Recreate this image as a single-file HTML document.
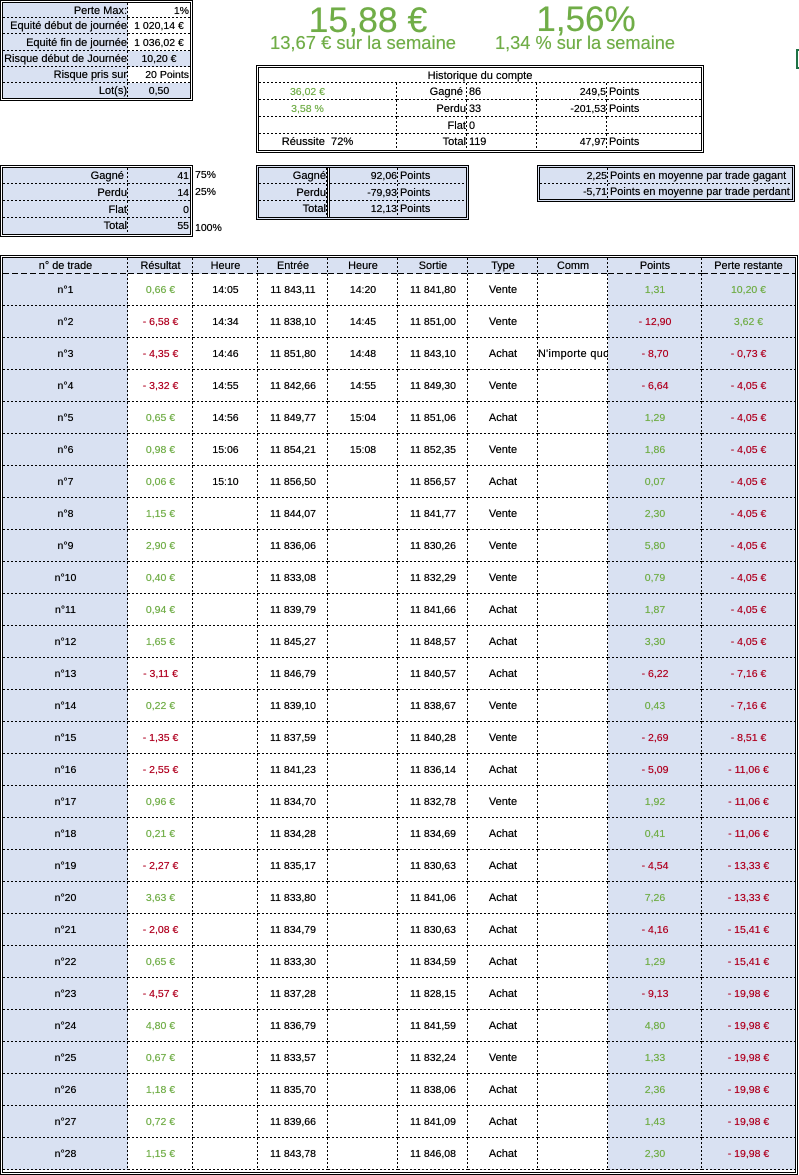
<!DOCTYPE html>
<html lang="fr"><head><meta charset="utf-8"><title>Journal de trading</title>
<style>
html,body{margin:0;padding:0;background:#fff}
body{width:799px;height:1170px;overflow:hidden;position:relative;font-family:"Liberation Sans",sans-serif;font-size:10.5px;color:#000;text-shadow:0 0 .4px currentColor}
.box{position:absolute;border:3px double #000;box-sizing:border-box;overflow:hidden}
table{table-layout:fixed;border-collapse:separate;border-spacing:0;width:100%}
td{padding:0 1px;white-space:nowrap;overflow:hidden;text-align:right;line-height:12px;box-sizing:border-box;
background-image:repeating-linear-gradient(90deg,#000 0 2px,transparent 2px 4px),repeating-linear-gradient(180deg,#000 0 2px,transparent 2px 4px);
background-position:left bottom,right top;background-size:100% 1px,1px 100%;background-repeat:no-repeat}
td:last-child{background-size:100% 1px,0 0}
tr:last-child td{background-size:0 0,1px 100%}
tr:last-child td:last-child{background-size:0 0,0 0}
.b{background-color:#d9e1f2}
.l{text-align:left;padding-left:2px;font-size:10.9px}.c{text-align:center}
.g{color:#70ad47}.r{color:#b00020}
.lab td:first-child{font-size:11px}
.w{font-size:11.1px}
.t{position:absolute;color:#70ad47;text-align:center;white-space:nowrap}
.n{position:absolute;white-space:nowrap;line-height:12px}
.dv{background:#fff;padding:0;border-left:1px solid #000;border-right:1px solid #000}
#m td{text-align:center;height:32px;background-size:100% 1px,1px 100%}
#m td:last-child{background-size:100% 1px,0 0}
#m td:nth-child(7){font-size:11px}
#m tr:first-child td{height:16px;font-size:10.9px;background-color:#d9e1f2;background-image:repeating-linear-gradient(90deg,#000 0 6px,transparent 6px 9px),repeating-linear-gradient(180deg,#000 0 2px,transparent 2px 4px)}
#m td.cm{text-align:left;padding:0;font-size:10.8px;letter-spacing:.35px}
</style></head><body>

<div class="box" style="left:0;top:0;width:193px;height:101px">
<table class="lab"><col style="width:125px"><col>
<tr style="height:15px"><td class="b">Perte Max:</td><td>1%</td></tr>
<tr style="height:16px"><td class="b">Equité début de journée</td><td class="c">1 020,14 €</td></tr>
<tr style="height:17px"><td class="b">Equité fin de journée</td><td class="c">1 036,02 €</td></tr>
<tr style="height:16px"><td class="b">Risque début de Journée</td><td class="b c">10,20 €</td></tr>
<tr style="height:16px"><td class="b">Risque pris sur</td><td>20 Points</td></tr>
<tr style="height:15px"><td class="b">Lot(s)</td><td class="b c">0,50</td></tr>
</table></div>

<div class="t" style="left:268px;width:200px;top:-1px;font-size:35.6px;line-height:42px">15,88 €</div>
<div class="t" style="left:486px;width:200px;top:-1px;font-size:35px;line-height:42px">1,56%</div>
<div class="t" style="left:263px;width:200px;top:32px;font-size:18.4px;line-height:22px">13,67 € sur la semaine</div>
<div class="t" style="left:485px;width:200px;top:32px;font-size:18.2px;line-height:22px">1,34 % sur la semaine</div>

<div style="position:absolute;left:796px;top:49px;width:6px;height:16px;border:2px solid #1e7145"></div>

<div class="box" style="left:256px;top:65px;width:448px;height:88px">
<table><col style="width:138px"><col style="width:70px"><col style="width:70px"><col style="width:70px"><col>
<tr style="height:15px"><td colspan="5" class="c w">Historique du compte</td></tr>
<tr style="height:17px"><td class="c g" style="padding-right:42px">36,02 €</td><td class="w">Gagné&nbsp;</td><td class="l">86</td><td>249,5</td><td class="l">Points</td></tr>
<tr style="height:17px"><td class="c g" style="padding-right:42px">3,58 %</td><td class="w">Perdu</td><td class="l">33</td><td>-201,53</td><td class="l">Points</td></tr>
<tr style="height:17px"><td></td><td class="w">Flat</td><td class="l">0</td><td></td><td></td></tr>
<tr style="height:16px"><td class="c w" style="padding-right:22px">Réussite &nbsp;72%</td><td class="w">Total</td><td class="l">119</td><td>47,97</td><td class="l">Points</td></tr>
</table></div>

<div class="box" style="left:0;top:165px;width:193px;height:72px">
<table><col style="width:125px"><col>
<tr style="height:16px"><td class="b w">Gagné&nbsp;</td><td class="b">41</td></tr>
<tr style="height:17px"><td class="b w">Perdu</td><td class="b">14</td></tr>
<tr style="height:17px"><td class="b w">Flat</td><td class="b">0</td></tr>
<tr style="height:16px"><td class="b w">Total</td><td class="b">55</td></tr>
</table></div>
<div class="n" style="left:195px;top:169px">75%</div>
<div class="n" style="left:195px;top:186px">25%</div>
<div class="n" style="left:195px;top:222px">100%</div>

<div class="box" style="left:256px;top:165px;width:213px;height:55px;background:#d9e1f2">
<table><col style="width:68px"><col style="width:3px"><col style="width:68px"><col>
<tr style="height:16px"><td class="w">Gagné</td><td class="dv"></td><td>92,06</td><td class="l">Points</td></tr>
<tr style="height:17px"><td class="w">Perdu</td><td class="dv"></td><td>-79,93</td><td class="l">Points</td></tr>
<tr style="height:16px"><td class="w">Total</td><td class="dv"></td><td>12,13</td><td class="l">Points</td></tr>
</table></div>

<div class="box" style="left:537px;top:165px;width:258px;height:37px;background:#d9e1f2">
<table><col style="width:68px"><col>
<tr style="height:16px"><td>2,25</td><td class="l">Points en moyenne par trade gagant</td></tr>
<tr style="height:15px"><td>-5,71</td><td class="l">Points en moyenne par trade perdant</td></tr>
</table></div>

<div class="box" style="left:0;top:255px;width:798px;height:920px">
<table id="m"><col class="b" style="width:125px"><col style="width:65px"><col style="width:65px"><col style="width:70px"><col style="width:70px"><col style="width:70px"><col style="width:70px"><col style="width:70px"><col class="b" style="width:94px"><col class="b">
<tr><td>n° de trade</td><td>Résultat</td><td>Heure</td><td>Entrée</td><td>Heure</td><td>Sortie</td><td>Type</td><td>Comm</td><td>Points</td><td>Perte restante</td></tr>
<tr><td>n°1</td><td class="g">0,66 €</td><td>14:05</td><td>11 843,11</td><td>14:20</td><td>11 841,80</td><td>Vente</td><td></td><td class="g">1,31</td><td class="g">10,20 €</td></tr>
<tr><td>n°2</td><td class="r">- 6,58 €</td><td>14:34</td><td>11 838,10</td><td>14:45</td><td>11 851,00</td><td>Vente</td><td></td><td class="r">- 12,90</td><td class="g">3,62 €</td></tr>
<tr><td>n°3</td><td class="r">- 4,35 €</td><td>14:46</td><td>11 851,80</td><td>14:48</td><td>11 843,10</td><td>Achat</td><td class="cm">N'importe quoi</td><td class="r">- 8,70</td><td class="r">- 0,73 €</td></tr>
<tr><td>n°4</td><td class="r">- 3,32 €</td><td>14:55</td><td>11 842,66</td><td>14:55</td><td>11 849,30</td><td>Vente</td><td></td><td class="r">- 6,64</td><td class="r">- 4,05 €</td></tr>
<tr><td>n°5</td><td class="g">0,65 €</td><td>14:56</td><td>11 849,77</td><td>15:04</td><td>11 851,06</td><td>Achat</td><td></td><td class="g">1,29</td><td class="r">- 4,05 €</td></tr>
<tr><td>n°6</td><td class="g">0,98 €</td><td>15:06</td><td>11 854,21</td><td>15:08</td><td>11 852,35</td><td>Vente</td><td></td><td class="g">1,86</td><td class="r">- 4,05 €</td></tr>
<tr><td>n°7</td><td class="g">0,06 €</td><td>15:10</td><td>11 856,50</td><td></td><td>11 856,57</td><td>Achat</td><td></td><td class="g">0,07</td><td class="r">- 4,05 €</td></tr>
<tr><td>n°8</td><td class="g">1,15 €</td><td></td><td>11 844,07</td><td></td><td>11 841,77</td><td>Vente</td><td></td><td class="g">2,30</td><td class="r">- 4,05 €</td></tr>
<tr><td>n°9</td><td class="g">2,90 €</td><td></td><td>11 836,06</td><td></td><td>11 830,26</td><td>Vente</td><td></td><td class="g">5,80</td><td class="r">- 4,05 €</td></tr>
<tr><td>n°10</td><td class="g">0,40 €</td><td></td><td>11 833,08</td><td></td><td>11 832,29</td><td>Vente</td><td></td><td class="g">0,79</td><td class="r">- 4,05 €</td></tr>
<tr><td>n°11</td><td class="g">0,94 €</td><td></td><td>11 839,79</td><td></td><td>11 841,66</td><td>Achat</td><td></td><td class="g">1,87</td><td class="r">- 4,05 €</td></tr>
<tr><td>n°12</td><td class="g">1,65 €</td><td></td><td>11 845,27</td><td></td><td>11 848,57</td><td>Achat</td><td></td><td class="g">3,30</td><td class="r">- 4,05 €</td></tr>
<tr><td>n°13</td><td class="r">- 3,11 €</td><td></td><td>11 846,79</td><td></td><td>11 840,57</td><td>Achat</td><td></td><td class="r">- 6,22</td><td class="r">- 7,16 €</td></tr>
<tr><td>n°14</td><td class="g">0,22 €</td><td></td><td>11 839,10</td><td></td><td>11 838,67</td><td>Vente</td><td></td><td class="g">0,43</td><td class="r">- 7,16 €</td></tr>
<tr><td>n°15</td><td class="r">- 1,35 €</td><td></td><td>11 837,59</td><td></td><td>11 840,28</td><td>Vente</td><td></td><td class="r">- 2,69</td><td class="r">- 8,51 €</td></tr>
<tr><td>n°16</td><td class="r">- 2,55 €</td><td></td><td>11 841,23</td><td></td><td>11 836,14</td><td>Achat</td><td></td><td class="r">- 5,09</td><td class="r">- 11,06 €</td></tr>
<tr><td>n°17</td><td class="g">0,96 €</td><td></td><td>11 834,70</td><td></td><td>11 832,78</td><td>Vente</td><td></td><td class="g">1,92</td><td class="r">- 11,06 €</td></tr>
<tr><td>n°18</td><td class="g">0,21 €</td><td></td><td>11 834,28</td><td></td><td>11 834,69</td><td>Achat</td><td></td><td class="g">0,41</td><td class="r">- 11,06 €</td></tr>
<tr><td>n°19</td><td class="r">- 2,27 €</td><td></td><td>11 835,17</td><td></td><td>11 830,63</td><td>Achat</td><td></td><td class="r">- 4,54</td><td class="r">- 13,33 €</td></tr>
<tr><td>n°20</td><td class="g">3,63 €</td><td></td><td>11 833,80</td><td></td><td>11 841,06</td><td>Achat</td><td></td><td class="g">7,26</td><td class="r">- 13,33 €</td></tr>
<tr><td>n°21</td><td class="r">- 2,08 €</td><td></td><td>11 834,79</td><td></td><td>11 830,63</td><td>Achat</td><td></td><td class="r">- 4,16</td><td class="r">- 15,41 €</td></tr>
<tr><td>n°22</td><td class="g">0,65 €</td><td></td><td>11 833,30</td><td></td><td>11 834,59</td><td>Achat</td><td></td><td class="g">1,29</td><td class="r">- 15,41 €</td></tr>
<tr><td>n°23</td><td class="r">- 4,57 €</td><td></td><td>11 837,28</td><td></td><td>11 828,15</td><td>Achat</td><td></td><td class="r">- 9,13</td><td class="r">- 19,98 €</td></tr>
<tr><td>n°24</td><td class="g">4,80 €</td><td></td><td>11 836,79</td><td></td><td>11 841,59</td><td>Achat</td><td></td><td class="g">4,80</td><td class="r">- 19,98 €</td></tr>
<tr><td>n°25</td><td class="g">0,67 €</td><td></td><td>11 833,57</td><td></td><td>11 832,24</td><td>Vente</td><td></td><td class="g">1,33</td><td class="r">- 19,98 €</td></tr>
<tr><td>n°26</td><td class="g">1,18 €</td><td></td><td>11 835,70</td><td></td><td>11 838,06</td><td>Achat</td><td></td><td class="g">2,36</td><td class="r">- 19,98 €</td></tr>
<tr><td>n°27</td><td class="g">0,72 €</td><td></td><td>11 839,66</td><td></td><td>11 841,09</td><td>Achat</td><td></td><td class="g">1,43</td><td class="r">- 19,98 €</td></tr>
<tr><td>n°28</td><td class="g">1,15 €</td><td></td><td>11 843,78</td><td></td><td>11 846,08</td><td>Achat</td><td></td><td class="g">2,30</td><td class="r">- 19,98 €</td></tr>
</table></div>
</body></html>
